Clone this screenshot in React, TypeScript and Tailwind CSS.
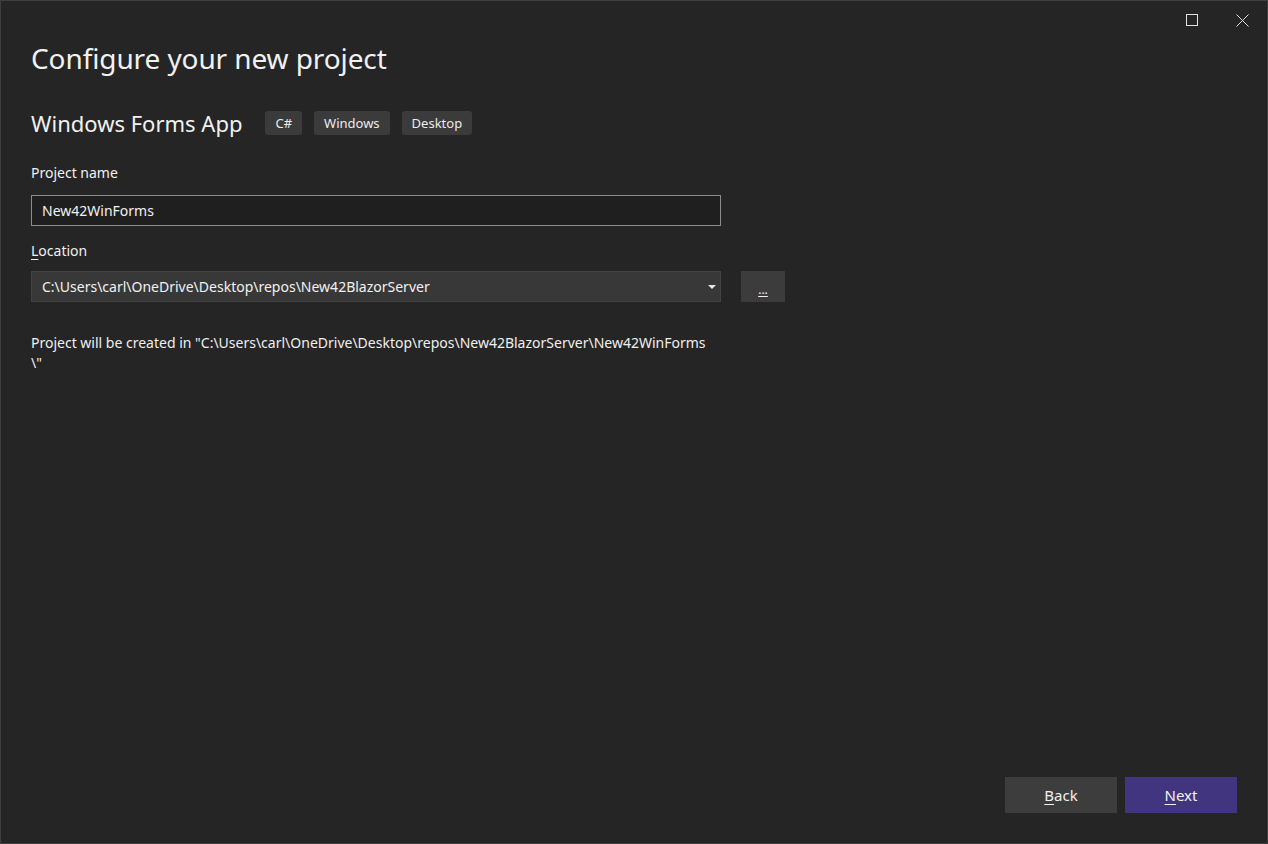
export default function App() {
  const tags = ["C#", "Windows", "Desktop"];

  return (
    <div
      className="w-[1268px] h-[844px] bg-[#252525] border border-[#3f3f3f] text-[#f1f1f1] flex flex-col overflow-hidden"
      style={{ fontFamily: '"Noto Sans", "Open Sans", sans-serif' }}
    >
      {/* title bar controls */}
      <div className="flex justify-end h-[38px] shrink-0">
        <button aria-label="Maximize" className="w-[50px] h-[38px] flex items-center justify-center">
          <span className="block w-[12px] h-[12px] border border-[#e0e0e0]" />
        </button>
        <button aria-label="Close" className="w-[50px] h-[38px] flex items-center justify-center">
          <svg width="13" height="13" viewBox="0 0 13 13" fill="none" stroke="#e0e0e0" strokeWidth="1">
            <path d="M0.5 0.5 L12.5 12.5 M12.5 0.5 L0.5 12.5" />
          </svg>
        </button>
      </div>

      <div className="flex-1 flex flex-col px-[30px]">
        <h1 className="text-[28px] leading-[40px] -mt-[1px] tracking-[-0.1px]">Configure your new project</h1>

        <div className="flex items-center mt-[30px] h-[30px]">
          <h2 className="text-[22px] leading-[30px] mr-[23px]">Windows Forms App</h2>
          <div className="flex gap-[12px]">
            {tags.map((t) => (
              <span key={t} className="h-[24px] px-[10px] rounded-[3px] bg-[#3b3b3b] text-[13px] leading-[24px] text-[#ececec]">
                {t}
              </span>
            ))}
          </div>
        </div>

        <label className="text-[14px] leading-[20px] mt-[25px]">Project name</label>
        <div className="mt-[12px] w-[690px] h-[31px] border border-[#8c8c8c] bg-[#1f1f1f] flex items-center px-[10px] text-[14px]">
          New42WinForms
        </div>

        <label className="text-[14px] leading-[20px] mt-[15px]">
          <span className="underline underline-offset-[3px]">L</span>ocation
        </label>
        <div className="flex items-center mt-[10px] gap-[20px]">
          <div className="w-[690px] h-[31px] border border-[#434343] bg-[#383838] flex items-center pl-[10px] pr-[4px] text-[14px]">
            <span className="flex-1">C:\Users\carl\OneDrive\Desktop\repos\New42BlazorServer</span>
            <svg width="8" height="4" viewBox="0 0 8 4">
              <path d="M0 0 H8 L4 4 Z" fill="#e8e8e8" />
            </svg>
          </div>
          <button className="w-[44px] h-[31px] bg-[#3c3c3c] flex items-end justify-center pb-[6px] text-[12px] leading-none">
            <span className="underline underline-offset-[2px]">...</span>
          </button>
        </div>

        <p className="mt-[31px] text-[14px] leading-[20px] text-[#efefef]">
          Project will be created in "C:\Users\carl\OneDrive\Desktop\repos\New42BlazorServer\New42WinForms
          <br />
          \"
        </p>

        <div className="flex-1" />

        <div className="flex justify-end gap-[8px] pb-[30px]">
          <button className="w-[112px] h-[36px] bg-[#3d3d3d] text-[15px]">
            <span className="underline underline-offset-[3px]">B</span>ack
          </button>
          <button className="w-[112px] h-[36px] bg-[#41357f] text-[15px]">
            <span className="underline underline-offset-[3px]">N</span>ext
          </button>
        </div>
      </div>
    </div>
  );
}
